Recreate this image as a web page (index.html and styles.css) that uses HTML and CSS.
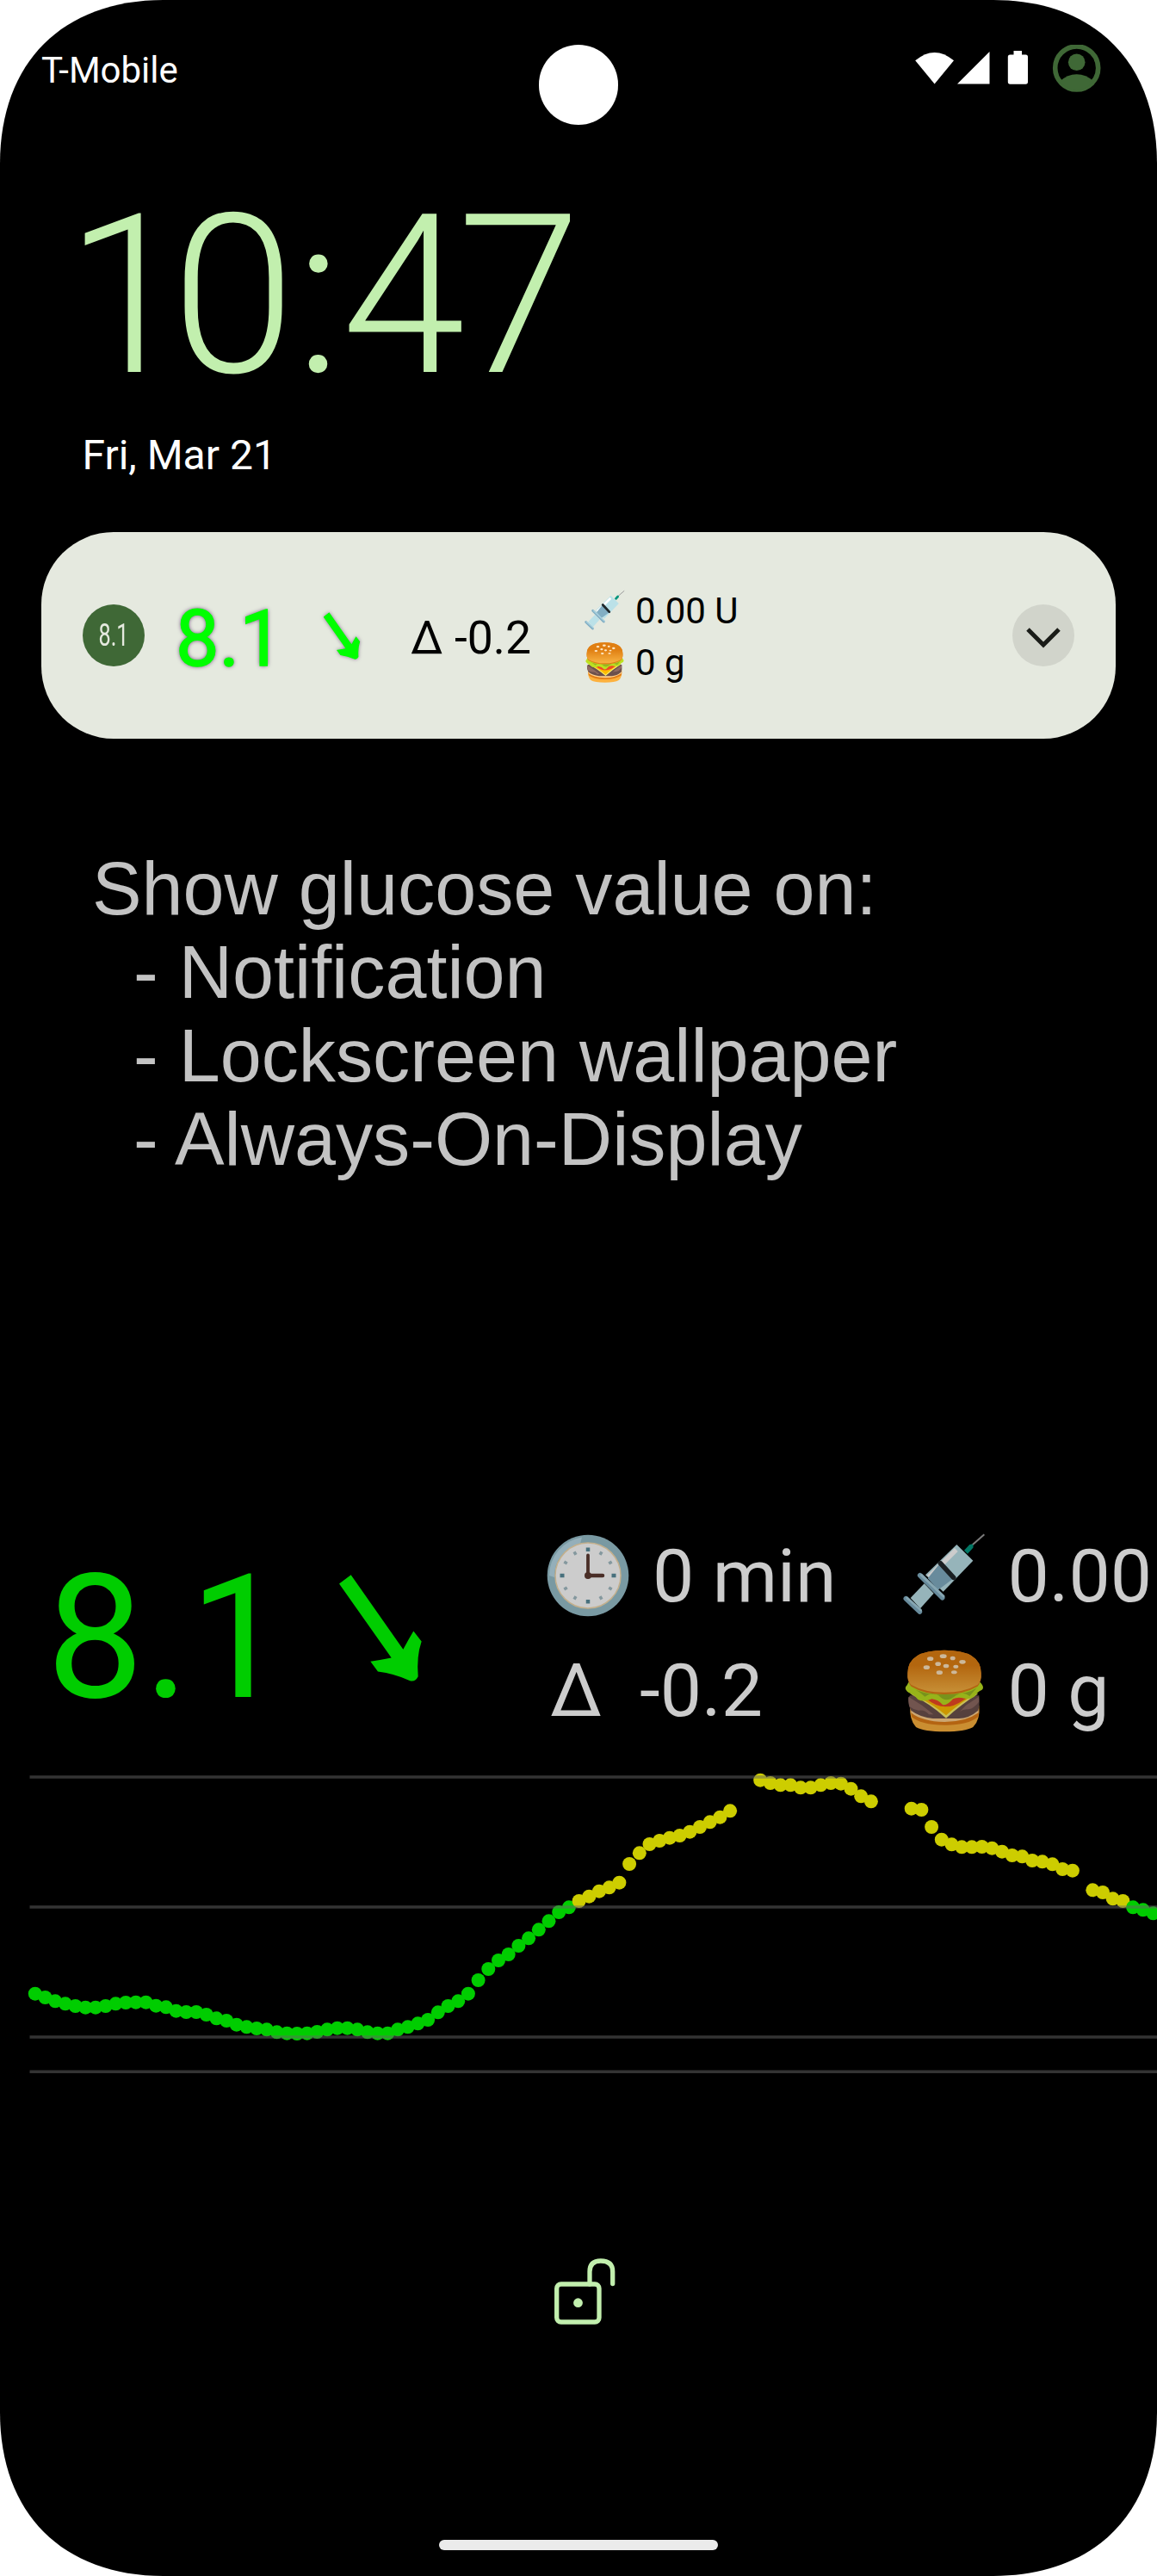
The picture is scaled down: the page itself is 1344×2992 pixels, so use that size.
FILE: index.html
```html
<!DOCTYPE html>
<html lang="en">
<head>
<meta charset="utf-8">
<title>Lock screen</title>
<link rel="stylesheet" href="styles.css">
</head>
<body>
<svg class="defs" aria-hidden="true">
  <defs>
    <linearGradient id="bun" x1="0" y1="0" x2="0" y2="1">
      <stop offset="0.35" stop-color="#e07f12"/><stop offset="1" stop-color="#f8b344"/>
    </linearGradient>
    <symbol id="arrow" viewBox="0 0 300 380">
      <path d="M262 202 L290 238 Q272 290 278 360 Q268 380 250 375 Q195 350 138 343 L112 308 Q150 302 185 295 L3 37 L44 6 L226 266 Q245 230 262 202Z"/>
    </symbol>
    <symbol id="syringe" viewBox="0 0 300 300">
      <path d="M248 43 L289 7" stroke="#9b9b9b" stroke-width="6"/>
      <path d="M219 62 L238 42 Q254 36 250 53 L231 74Z" fill="#00957d"/>
      <path d="M80 178 L113 212 L66 265 L32 228Z" fill="#bbe1e8"/>
      <path d="M193 42 L250 98 L146 206 L84 148Z" fill="#bbe1e8"/>
      <path d="M186 54 L197 66 L102 161 L90 149Z" fill="#fff"/>
      <path d="M132 110 L182 160 L128 200 L92 160Z" fill="#82aec3"/>
      <path d="M136 107 L182 157" stroke="#20272a" stroke-width="17" stroke-linecap="round"/>
      <path d="M65 149 L143 227" stroke="#82aec3" stroke-width="17" stroke-linecap="round"/>
      <path d="M70 148 L147 222" stroke="#a7d0df" stroke-width="9" stroke-linecap="round"/>
      <path d="M16 230 L64 276" stroke="#82aec3" stroke-width="17" stroke-linecap="round"/>
      <path d="M20 228 L68 271" stroke="#a7d0df" stroke-width="8" stroke-linecap="round"/>
    </symbol>
    <symbol id="burger" viewBox="0 0 300 300">
      <path d="M31 200 H271 Q276 250 250 276 Q222 292 152 292 Q78 292 51 276 Q27 250 31 200Z" fill="#fdb13d"/>
      <path d="M33 214 Q150 290 271 214 L268 240 Q230 270 151 269 Q66 268 36 240Z" fill="#e17d17"/>
      <path d="M34 205 H269 V226 Q225 258 151 258 Q72 257 34 226Z" fill="#ffd08d"/>
      <path d="M30 166 H271 Q274 200 268 218 Q235 246 200 246 H110 Q62 240 34 218 Q22 195 24 176Z" fill="#6c504c"/>
      <path d="M25 170 L72 200 L112 232 L96 232 Q82 214 60 218 Q40 214 28 204Z M270 170 L225 200 L204 222 Q216 212 234 214 Q254 210 270 188Z" fill="#8f6a63"/>
      <path d="M30 160 L268 160 Q210 196 156 245 Q96 192 30 160Z" fill="#fbf06d"/>
      <path d="M62 174 H236 Q190 204 156 235 Q112 198 62 174Z" fill="#ffbd00"/>
      <path d="M68 166 L88 178 Q150 230 216 182 L244 166Z" fill="#ee4a25"/>
      <path d="M25 120 H275 Q292 138 280 147 Q266 152 258 166 Q248 180 220 176 Q196 170 180 178 Q160 202 144 198 Q128 180 106 178 Q78 190 58 180 Q46 164 26 156 Q6 142 20 130Z" fill="#bde020"/>
      <path d="M40 142 Q100 170 151 160 Q222 166 262 140 L238 168 Q214 150 190 166 Q156 196 130 166 Q104 154 82 170 Q60 150 40 142Z" fill="#96b623"/>
      <path d="M22 88 Q22 8 150 8 Q278 8 278 88 Q280 118 266 134 Q218 162 150 162 Q80 162 34 134 Q20 118 22 88Z" fill="#e17d17"/>
      <path d="M22 88 Q22 8 150 8 Q278 8 278 88 Q280 116 266 128 Q218 155 150 155 Q80 155 34 128 Q20 116 22 88Z" fill="url(#bun)"/>
      <g fill="#ffe6c2">
        <ellipse cx="101" cy="38" rx="11" ry="7"/><ellipse cx="146" cy="29" rx="12" ry="7"/>
        <ellipse cx="179" cy="36" rx="9" ry="7"/><ellipse cx="213" cy="49" rx="11" ry="7"/>
        <ellipse cx="88" cy="68" rx="11" ry="7"/><ellipse cx="128" cy="56" rx="10" ry="7"/>
        <ellipse cx="156" cy="63" rx="10" ry="7"/><ellipse cx="190" cy="65" rx="9" ry="6"/>
        <ellipse cx="133" cy="86" rx="11" ry="7"/><ellipse cx="184" cy="85" rx="10" ry="6"/>
      </g>
    </symbol>
  </defs>
</svg>

<main class="phone">
  <div class="camera"></div>

  <header class="status">
    <span class="carrier">T-Mobile</span>
    <svg class="status-icons" viewBox="0 0 220 60" aria-hidden="true">
      <g fill="#fff">
        <path d="M3.2 18.3 Q25.6 -0.5 48 18.3 L25.6 45.6Z"/>
        <path d="M89.5 8 V45.6 H52Z"/>
        <path d="M117.5 7 H127 V11.4 H131.5 Q134 11.4 134 14 V43 Q134 45.7 131.5 45.7 H113.3 Q110.8 45.7 110.8 43 V14 Q110.8 11.4 113.3 11.4 H117.5Z"/>
      </g>
      <circle cx="190.7" cy="27" r="25" fill="none" stroke="#3f6836" stroke-width="5.6"/>
      <circle cx="190.7" cy="20.2" r="9.8" fill="#3f6836"/>
      <path d="M171 42.5 Q180 34.2 190.7 34.2 Q201.5 34.2 210.5 42.5 Q202 52 190.7 52 Q179.5 52 171 42.5Z" fill="#3f6836"/>
    </svg>
  </header>

  <div class="clock"><span class="tens">1</span>0:<span class="minute-tens">4</span>7</div>
  <div class="date">Fri, Mar 21</div>

  <section class="notification">
    <div class="badge"><span>8.1</span></div>
    <div class="note-value">8.1</div>
    <svg class="note-arrow"><use href="#arrow"/></svg>
    <div class="note-delta">Δ -0.2</div>
    <div class="note-lines">
      <div class="note-line"><svg class="emoji-small"><use href="#syringe"/></svg><span>0.00 U</span></div>
      <div class="note-line"><svg class="emoji-small"><use href="#burger"/></svg><span>0 g</span></div>
    </div>
    <button class="expand" aria-label="Expand">
      <svg viewBox="0 0 72 72"><path d="M18 29 L36 47 L54 29" fill="none" stroke="#1a1c18" stroke-width="5"/></svg>
    </button>
  </section>

  <section class="copy">Show glucose value on:
  - Notification
  - Lockscreen wallpaper
  - Always-On-Display</section>

  <section class="glucose">
    <div class="big-value">8.1</div>
    <svg class="big-arrow"><use href="#arrow"/></svg>
    <div class="facts">
      <div class="fact">
        <svg class="clock-face" viewBox="0 0 100 100" aria-hidden="true">
          <circle cx="50" cy="50" r="47.3" fill="#97bfcb"/>
          <path d="M5 50 A45 45 0 0 1 43 5.5 L41 13 A38 38 0 0 0 11 52Z" fill="#b9dbe8"/>
          <circle cx="50" cy="50" r="38" fill="#fff" stroke="#f5dcb0" stroke-width="1.5"/>
          <path d="M50 17.5 V22 M50 78 V82.5 M17.5 50 H22.5 M77.5 50 H82.5" stroke="#5a8c9c" stroke-width="4.5"/>
          <path d="M34 22.3 L36 25.8 M66 22.3 L64 25.8 M34 77.7 L36 74.2 M66 77.7 L64 74.2 M22.3 34 L25.8 36 M77.7 34 L74.2 36 M22.3 66 L25.8 64 M77.7 66 L74.2 64" stroke="#a5bec6" stroke-width="3.5"/>
          <path d="M50 50 V26.5" stroke="#5d3a31" stroke-width="3.8" stroke-linecap="round"/>
          <path d="M50 50 H67" stroke="#5d3a31" stroke-width="4.5" stroke-linecap="round"/>
          <circle cx="50" cy="50" r="4" fill="#5d3a31"/>
        </svg>
        <span class="minutes">0 min</span>
      </div>
      <div class="fact"><span class="delta">Δ</span><span class="delta-value">-0.2</span></div>
    </div>
    <div class="facts">
      <div class="fact"><svg class="emoji"><use href="#syringe"/></svg><span>0.00</span></div>
      <div class="fact"><svg class="emoji"><use href="#burger"/></svg><span>0 g</span></div>
    </div>
  </section>

  <svg class="chart" id="chart" viewBox="0 0 1344 390" role="img" aria-label="Glucose history"></svg>

  <svg class="lock" viewBox="0 0 80 84" aria-hidden="true">
    <rect x="6.7" y="33" width="49.3" height="44" rx="5" />
    <path d="M45 33 V18.5 Q45 6 57.8 6 Q71.7 6 71.7 18.5 V32.5"/>
    <circle cx="31.5" cy="54.7" r="5.4"/>
  </svg>
  <div class="home-bar"></div>
</main>
<script src="chart.js"></script>
</body>
</html>
```
FILE: styles.css
```css
body { margin: 0; background: #fff; }
.defs { position: absolute; width: 0; height: 0; }

.phone {
  position: relative;
  display: flex;
  flex-direction: column;
  width: 1344px;
  height: 2992px;
  overflow: hidden;
  background: #000;
  font-family: Roboto, sans-serif;
  clip-path: path("M0 190 C0 72.7 72.7 0 190 0 H1154 C1271.3 0 1344 72.7 1344 190 V2802 C1344 2919.3 1271.3 2992 1154 2992 H190 C72.7 2992 0 2919.3 0 2802Z");
}
.camera {
  position: absolute;
  top: 52px;
  left: 625.5px;
  width: 92.5px;
  height: 92.5px;
  border-radius: 50%;
  background: #fff;
}

.status {
  display: flex;
  align-items: center;
  justify-content: space-between;
  height: 164px;
  padding: 0 64px 0 48px;
  color: #fff;
}
.carrier { font-size: 42px; margin-bottom: 2px; }
.status-icons { width: 220px; height: 60px; }

.clock {
  margin: 50px 0 0 76px;
  font-size: 258.5px;
  line-height: 260px;
  height: 260px;
  font-weight: 300;
  color: #c2efae;
  white-space: nowrap;
}
.tens { letter-spacing: -20px; }
.minute-tens { letter-spacing: -9px; }
.date {
  margin: 27px 0 0 95.5px;
  font-size: 48px;
  line-height: 56px;
  color: #fff;
}

.notification {
  display: flex;
  align-items: center;
  box-sizing: border-box;
  width: 1248px;
  height: 240px;
  margin: 61px 48px 0;
  padding: 0 48px;
  border-radius: 84px;
  background: #e5e9df;
  color: #000;
  white-space: nowrap;
}
.badge {
  display: flex;
  align-items: center;
  justify-content: center;
  width: 72px;
  height: 72px;
  border-radius: 50%;
  background: #3f6836;
  color: #e5e9df;
  font-size: 36px;
}
.badge span { transform: scaleX(0.7); }
.note-value {
  width: 172px;
  margin: 10px 0 0 36px;
  font-size: 90px;
  line-height: 100px;
  color: #0f0;
  -webkit-text-stroke: 1.5px #0f0;
  text-shadow: 0 0 5px #503060;
}
.note-arrow {
  width: 43px;
  height: 55px;
  fill: #0f0;
  stroke: #0f0;
  stroke-width: 8;
  filter: drop-shadow(0 0 2px #50306099);
}
.note-delta { width: 201px; margin: 5px 0 0 58px; font-size: 53.5px; }
.note-lines { margin-top: 3px; font-size: 42px; line-height: 60px; }
.note-line { display: flex; align-items: center; gap: 11px; }
.emoji-small { width: 49px; height: 49px; }
.expand {
  width: 72px;
  height: 72px;
  margin-left: auto;
  padding: 0;
  border: 0;
  border-radius: 50%;
  background: #d1d4cb;
}
.expand svg { display: block; }

.copy {
  margin: 125.5px 0 0 107px;
  height: 388px;
  font-family: "Liberation Sans", Arial, sans-serif;
  font-size: 86.3px;
  line-height: 97px;
  color: #c3c3c3;
  white-space: pre;
}

.glucose {
  display: flex;
  height: 267px;
  margin: 392px 0 0 54px;
  color: #ccc;
  font-size: 86px;
  line-height: 133.5px;
  white-space: nowrap;
}
.big-value {
  flex: none;
  width: 339px;
  font-size: 201px;
  line-height: 277px;
  color: #00cd00;
}
.big-arrow { flex: none; width: 100px; height: 127px; margin: 63px 140px 0 0; fill: #00cd00; }
.facts { width: 413.5px; flex: none; }
.fact { display: flex; align-items: center; height: 133.5px; }
.clock-face { width: 100px; height: 100px; margin-right: 25px; filter: brightness(0.8); }
.emoji { width: 100px; height: 100px; margin-right: 24px; filter: brightness(0.8); }
.delta { width: 104px; margin-left: 6px; }

.chart { display: block; flex: none; width: 1344px; height: 390px; margin-top: 9.5px; }
.lock {
  flex: none;
  width: 80px;
  height: 84px;
  margin: 190px 0 0 640px;
  fill: none;
  stroke: #c2efae;
  stroke-width: 5.3;
  stroke-linecap: round;
}
.lock circle { fill: #c2efae; stroke: none; }
.home-bar {
  width: 324px;
  height: 12px;
  margin: 246px 0 0 510px;
  border-radius: 6px;
  background: #ebebeb;
}
```
FILE: chart.js
```js
// Readings are taken every five minutes; each run starts at a slot number.
const STEP = 11.7;
const FIRST_X = 40.8;
const runs = [
  { slot: 0, color: "#00cd00", y: [827, 840, 853, 862, 870, 875, 875, 870, 862, 858, 857, 857, 869, 874, 887, 891, 891, 900, 913, 921, 935, 943, 948, 952, 961, 965, 966, 965, 960, 952, 947, 947, 952, 961, 965, 965, 952, 943, 931, 918, 892, 870, 853, 827, 780, 741, 711, 690, 660, 634, 604, 574, 543, 526] },
  { slot: 54, color: "#cdcd00", y: [504, 488, 470, 457, 440, 375, 337, 306, 294, 284, 276, 263, 246, 229, 212, 190] },
  { slot: 72, color: "#cdcd00", y: [83, 93, 100, 100, 109, 109, 100, 93, 95, 113, 139, 157] },
  { slot: 87, color: "#cdcd00", y: [182, 186, 246, 290, 307, 316, 316, 315, 320, 332, 345, 349, 363, 367, 376, 393, 398] },
  { slot: 105, color: "#cdcd00", y: [466, 474, 496, 504] },
  { slot: 109, color: "#00cd00", y: [526, 535, 547] }
];
const guides = [24, 175, 326, 366.3];

const chart = document.getElementById("chart");
function add(name, attrs) {
  const node = document.createElementNS("http://www.w3.org/2000/svg", name);
  for (const key in attrs) node.setAttribute(key, attrs[key]);
  chart.appendChild(node);
}
for (const run of runs) {
  run.y.forEach((y, i) => add("circle", { cx: FIRST_X + (run.slot + i) * STEP, cy: y / 3, r: 8, fill: run.color }));
}
for (const y of guides) {
  add("line", { x1: 34.5, x2: 1344, y1: y, y2: y, stroke: "#666", "stroke-opacity": 0.5, "stroke-width": 3.4 });
}
```
